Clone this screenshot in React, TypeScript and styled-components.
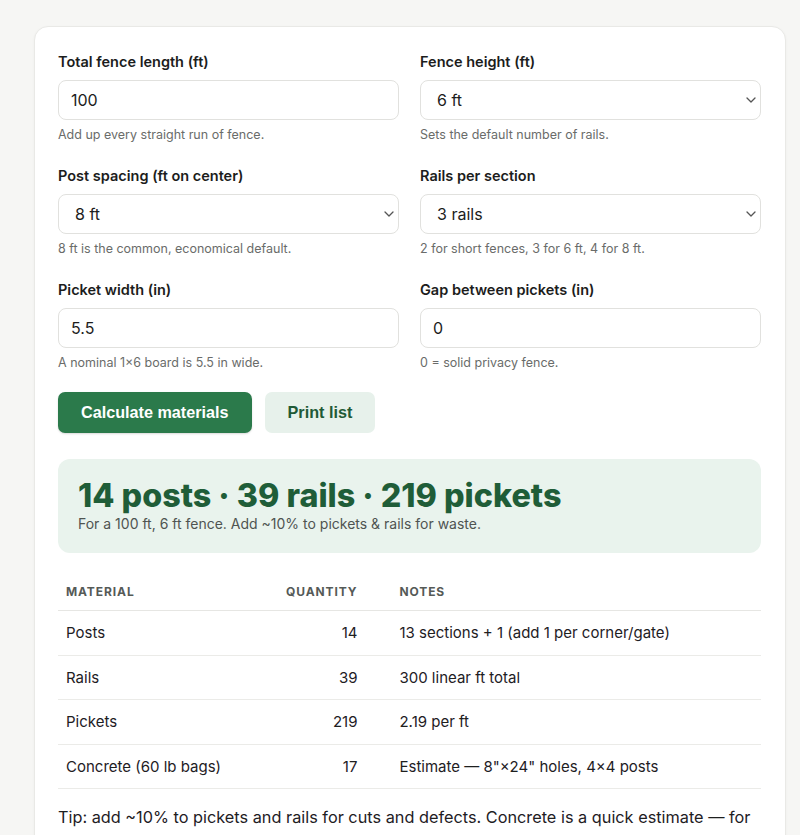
import React from "react";
import styled, { createGlobalStyle } from "styled-components";

const GlobalStyle = createGlobalStyle`
  html, body {
    margin: 0;
    padding: 0;
    background: #f6f6f4;
    font-family: Inter, "Noto Sans", "Liberation Sans", sans-serif;
    color: #1d1f1e;
  }
  * { box-sizing: border-box; }
`;

const Page = styled.div`
  padding: 26px 14px 0 34px;
`;

const Card = styled.div`
  background: #ffffff;
  border: 1px solid #e9e9e6;
  border-radius: 14px;
  box-shadow: 0 1px 3px rgba(0, 0, 0, 0.04);
  padding: 25px 24px 24px 23px;
`;

const FieldGrid = styled.div`
  display: grid;
  grid-template-columns: 1fr 1fr;
  column-gap: 21px;
  row-gap: 22px;
`;

const Field = styled.div`
  display: flex;
  flex-direction: column;
`;

const Label = styled.label`
  font-size: 14.5px;
  font-weight: 600;
  line-height: 20px;
  margin-bottom: 8px;
  color: #1c1d1c;
`;

const TextInput = styled.input`
  height: 40px;
  border: 1px solid #e1e1de;
  border-radius: 8px;
  padding: 0 12px;
  font: inherit;
  font-size: 16px;
  color: #1c1d1c;
  background: #fff;
  outline: none;
`;

const SelectWrap = styled.div`
  position: relative;
  display: flex;
`;

const Select = styled.select`
  flex: 1;
  height: 40px;
  appearance: none;
  border: 1px solid #e1e1de;
  border-radius: 8px;
  padding: 0 16px;
  font: inherit;
  font-size: 16px;
  color: #1c1d1c;
  background: #fff;
  outline: none;
`;

const Chevron = styled.svg`
  position: absolute;
  right: 5px;
  top: 17px;
  pointer-events: none;
`;

const Help = styled.div`
  margin-top: 6px;
  font-size: 12.5px;
  line-height: 18px;
  color: #6a6c6a;
`;

const Actions = styled.div`
  display: flex;
  gap: 13px;
  margin-top: 20px;
`;

const Button = styled.button<{ $primary?: boolean }>`
  height: 41px;
  border: none;
  border-radius: 7px;
  padding: 0 23px;
  font-family: "Liberation Sans", Arial, sans-serif;
  font-size: 16.2px;
  font-weight: 700;
  cursor: pointer;
  background: ${(p) => (p.$primary ? "#2b7a4b" : "#e7f1eb")};
  color: ${(p) => (p.$primary ? "#ffffff" : "#1f5a36")};
  box-shadow: ${(p) => (p.$primary ? "0 1px 2px rgba(0,0,0,0.15)" : "none")};
`;

const Result = styled.div`
  margin-top: 26px;
  background: #e9f3ed;
  border-radius: 12px;
  padding: 18px 20px 19px;
`;

const Headline = styled.div`
  font-size: 32.3px;
  font-weight: 800;
  line-height: 37px;
  color: #1f5d38;
`;

const Summary = styled.div`
  font-size: 14px;
  line-height: 20px;
  color: #4f5451;
`;

const Table = styled.table`
  width: 100%;
  margin-top: 20px;
  border-collapse: collapse;
`;

const Th = styled.th<{ $align?: string; $w?: string; $wide?: boolean }>`
  text-align: ${(p) => p.$align || "left"};
  width: ${(p) => p.$w || "auto"};
  font-size: 12px;
  font-weight: 700;
  letter-spacing: 0.9px;
  text-transform: uppercase;
  color: #555a57;
  padding: 10px 8px 9px ${(p) => (p.$wide ? "34px" : "8px")};
  line-height: 18px;
  border-bottom: 1px solid #e6e6e3;
`;

const Td = styled.td<{ $align?: string; $wide?: boolean }>`
  text-align: ${(p) => p.$align || "left"};
  font-size: 15px;
  line-height: 20px;
  padding: 12px 8px 11.5px ${(p) => (p.$wide ? "34px" : "8px")};
  color: #1e201f;
  border-bottom: 1px solid #ebebe8;
`;

const Tip = styled.p`
  margin: 15px 0 0;
  font-size: 16.3px;
  line-height: 27px;
  color: #1e201f;
`;

const ChevronIcon = () => (
  <Chevron width="10" height="6" viewBox="0 0 10 6">
    <path d="M1 1l4 4 4-4" fill="none" stroke="#555" strokeWidth="1.3" strokeLinecap="round" strokeLinejoin="round" />
  </Chevron>
);

const rows = [
  { material: "Posts", qty: "14", notes: "13 sections + 1 (add 1 per corner/gate)" },
  { material: "Rails", qty: "39", notes: "300 linear ft total" },
  { material: "Pickets", qty: "219", notes: "2.19 per ft" },
  { material: "Concrete (60 lb bags)", qty: "17", notes: "Estimate — 8\"×24\" holes, 4×4 posts" },
];

export default function App() {
  return (
    <Page>
      <GlobalStyle />
      <Card>
        <FieldGrid>
          <Field>
            <Label>Total fence length (ft)</Label>
            <TextInput defaultValue="100" />
            <Help>Add up every straight run of fence.</Help>
          </Field>
          <Field>
            <Label>Fence height (ft)</Label>
            <SelectWrap>
              <Select defaultValue="6">
                <option value="4">4 ft</option>
                <option value="6">6 ft</option>
                <option value="8">8 ft</option>
              </Select>
              <ChevronIcon />
            </SelectWrap>
            <Help>Sets the default number of rails.</Help>
          </Field>
          <Field>
            <Label>Post spacing (ft on center)</Label>
            <SelectWrap>
              <Select defaultValue="8">
                <option value="6">6 ft</option>
                <option value="8">8 ft</option>
              </Select>
              <ChevronIcon />
            </SelectWrap>
            <Help>8 ft is the common, economical default.</Help>
          </Field>
          <Field>
            <Label>Rails per section</Label>
            <SelectWrap>
              <Select defaultValue="3">
                <option value="2">2 rails</option>
                <option value="3">3 rails</option>
                <option value="4">4 rails</option>
              </Select>
              <ChevronIcon />
            </SelectWrap>
            <Help>2 for short fences, 3 for 6 ft, 4 for 8 ft.</Help>
          </Field>
          <Field>
            <Label>Picket width (in)</Label>
            <TextInput defaultValue="5.5" />
            <Help>A nominal 1×6 board is 5.5 in wide.</Help>
          </Field>
          <Field>
            <Label>Gap between pickets (in)</Label>
            <TextInput defaultValue="0" />
            <Help>0 = solid privacy fence.</Help>
          </Field>
        </FieldGrid>

        <Actions>
          <Button $primary>Calculate materials</Button>
          <Button>Print list</Button>
        </Actions>

        <Result>
          <Headline>14 posts · 39 rails · 219 pickets</Headline>
          <Summary>For a 100 ft, 6 ft fence. Add ~10% to pickets &amp; rails for waste.</Summary>
        </Result>

        <Table>
          <thead>
            <tr>
              <Th $w="220px">Material</Th>
              <Th $align="right" $w="87px">Quantity</Th>
              <Th $wide>Notes</Th>
            </tr>
          </thead>
          <tbody>
            {rows.map((r) => (
              <tr key={r.material}>
                <Td>{r.material}</Td>
                <Td $align="right">{r.qty}</Td>
                <Td $wide>{r.notes}</Td>
              </tr>
            ))}
          </tbody>
        </Table>

        <Tip>
          Tip: add ~10% to pickets and rails for cuts and defects. Concrete is a quick estimate — for
          exact amounts, follow the bag's instructions for your hole size.
        </Tip>
      </Card>
    </Page>
  );
}
